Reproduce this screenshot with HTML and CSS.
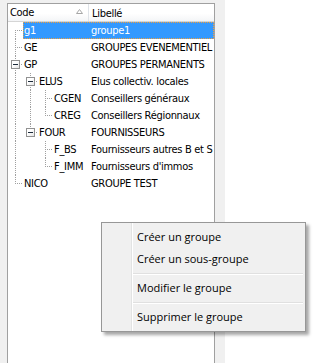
FILE: index.html
```html
<!DOCTYPE html>
<html lang="fr">
<head>
    <meta charset="UTF-8">
    <title>Groupes</title>
    <link rel="stylesheet" href="styles.css">
</head>
<body>
    <div class="screen">
        <div class="gutter"></div>

        <div class="tree">
            <div class="tree-head">
                <div class="head-code">
                    <span>Code</span>
                    <svg class="sort" width="7" height="5" viewBox="0 0 7 5"><polygon points="0.5,4.5 3.5,0.5 6.5,4.5" fill="none" stroke="#a6a6a6"/></svg>
                </div>
                <div class="head-label">Libellé</div>
            </div>

            <div class="row l0">
                <span class="guide first"></span>
                <div class="item selected"><span class="code">g1</span><span class="label">groupe1</span></div>
            </div>
            <div class="row l0">
                <span class="guide tee"></span>
                <div class="item"><span class="code">GE</span><span class="label">GROUPES EVENEMENTIEL</span></div>
            </div>
            <div class="row l0">
                <span class="guide tee"><span class="toggle"></span></span>
                <div class="item"><span class="code">GP</span><span class="label">GROUPES PERMANENTS</span></div>
            </div>
            <div class="row l1">
                <span class="guide pipe"></span>
                <span class="guide tee"><span class="toggle"></span></span>
                <div class="item"><span class="code">ELUS</span><span class="label">Elus collectiv. locales</span></div>
            </div>
            <div class="row l2">
                <span class="guide pipe"></span>
                <span class="guide pipe"></span>
                <span class="guide tee"></span>
                <div class="item"><span class="code">CGEN</span><span class="label">Conseillers généraux</span></div>
            </div>
            <div class="row l2">
                <span class="guide pipe"></span>
                <span class="guide pipe"></span>
                <span class="guide elbow"></span>
                <div class="item"><span class="code">CREG</span><span class="label">Conseillers Régionnaux</span></div>
            </div>
            <div class="row l1">
                <span class="guide pipe"></span>
                <span class="guide elbow"><span class="toggle"></span></span>
                <div class="item"><span class="code">FOUR</span><span class="label">FOURNISSEURS</span></div>
            </div>
            <div class="row l2">
                <span class="guide pipe"></span>
                <span class="guide"></span>
                <span class="guide tee"></span>
                <div class="item"><span class="code">F_BS</span><span class="label">Fournisseurs autres B et S</span></div>
            </div>
            <div class="row l2">
                <span class="guide pipe"></span>
                <span class="guide"></span>
                <span class="guide elbow"></span>
                <div class="item"><span class="code">F_IMM</span><span class="label">Fournisseurs d'immos</span></div>
            </div>
            <div class="row l0">
                <span class="guide elbow"></span>
                <div class="item"><span class="code">NICO</span><span class="label">GROUPE TEST</span></div>
            </div>
        </div>

        <div class="splitter"></div>
        <div class="pane"></div>

        <ul class="menu">
            <li>Créer un groupe</li>
            <li>Créer un sous-groupe</li>
            <li class="sep"></li>
            <li>Modifier le groupe</li>
            <li class="sep"></li>
            <li>Supprimer le groupe</li>
        </ul>
    </div>
</body>
</html>
```

FILE: styles.css
```css
* {
    box-sizing: border-box;
}

body {
    margin: 0;
    font-family: "DejaVu Sans Condensed", "DejaVu Sans", sans-serif;
    font-size: 11px;
    letter-spacing: -0.3px;
    color: #000;
    background-color: #f0f0f0;
}

.screen {
    position: relative;
    display: flex;
    height: 363px;
    overflow: hidden;
}

.gutter {
    width: 7px;
    flex: none;
}

.tree {
    width: 208px;
    flex: none;
    margin-top: 3px;
    background-color: #fff;
    border: 1px solid #a0a0a0;
    border-bottom: none;
    overflow: hidden;
}

.splitter {
    width: 10px;
    flex: none;
}

.pane {
    flex: 1;
    background-color: #fff;
}

/* header */

.tree-head {
    display: flex;
    height: 18px;
    line-height: 19px;
    border-bottom: 1px solid #d5d5d5;
    background: linear-gradient(to bottom, #fff 55%, #f4f5f7);
}

.head-code {
    width: 81px;
    display: flex;
    align-items: center;
    padding-left: 2px;
    border-right: 1px solid #dfe3e8;
}

.head-code span {
    flex: 1;
}

.sort {
    margin-right: 5px;
    margin-top: -2px;
}

.head-label {
    flex: 1;
    padding-left: 3px;
}

/* rows */

.row {
    display: flex;
    height: 17px;
    line-height: 17px;
    white-space: nowrap;
}

.guide {
    position: relative;
    width: 15px;
    flex: none;
}

.guide::before,
.guide::after {
    content: "";
    position: absolute;
}

.pipe::before,
.tee::before,
.elbow::before,
.first::before {
    left: 7px;
    width: 1px;
    background: repeating-linear-gradient(to bottom, #a0a0a0 0 1px, transparent 1px 2px);
}

.pipe::before,
.tee::before {
    top: 0;
    bottom: 0;
}

.elbow::before {
    top: 0;
    height: 9px;
}

.first::before {
    top: 8px;
    bottom: 0;
}

.tee::after,
.elbow::after,
.first::after {
    left: 9px;
    top: 8px;
    width: 6px;
    height: 1px;
    background: repeating-linear-gradient(to right, #a0a0a0 0 1px, transparent 1px 2px);
}

.toggle {
    position: absolute;
    left: 3px;
    top: 4px;
    width: 9px;
    height: 9px;
    border: 1px solid #919191;
    background: linear-gradient(to bottom right, #fff 40%, #e4e4e4);
    z-index: 1;
}

.toggle::after {
    content: "";
    position: absolute;
    left: 1px;
    top: 3px;
    width: 5px;
    height: 1px;
    background-color: #1c2a3a;
}

.item {
    flex: 1;
    display: flex;
    min-width: 0;
    padding-left: 1px;
}

.item.selected {
    background-color: #3399ff;
    color: #fff;
    outline: 1px dotted #f0a040;
    outline-offset: -1px;
}

.code {
    flex: none;
}

.l0 .code { width: 64px; }
.l1 .code { width: 49px; }
.l2 .code { width: 34px; }

.label {
    flex: 1;
    padding-left: 3px;
    overflow: hidden;
}

/* context menu */

.menu {
    position: absolute;
    left: 101px;
    top: 222px;
    width: 205px;
    margin: 0;
    padding: 3px 2px;
    list-style: none;
    font-family: "Open Sans", sans-serif;
    font-size: 11px;
    letter-spacing: 0;
    background-color: #f0f0f0;
    background-image: linear-gradient(to right, transparent 29px, #e2e3e3 29px, #e2e3e3 30px, #fff 30px, #fff 31px, transparent 31px);
    border: 1px solid #979797;
    box-shadow: 3px 3px 3px rgba(0, 0, 0, 0.35);
}

.menu li {
    height: 22px;
    line-height: 22px;
    padding-left: 33px;
}

.menu li.sep {
    height: 7px;
    margin-left: 29px;
    padding: 0;
    background: linear-gradient(to bottom, transparent 3px, #e0e0e0 3px, #e0e0e0 4px, #fff 4px, #fff 5px, transparent 5px);
}
```
